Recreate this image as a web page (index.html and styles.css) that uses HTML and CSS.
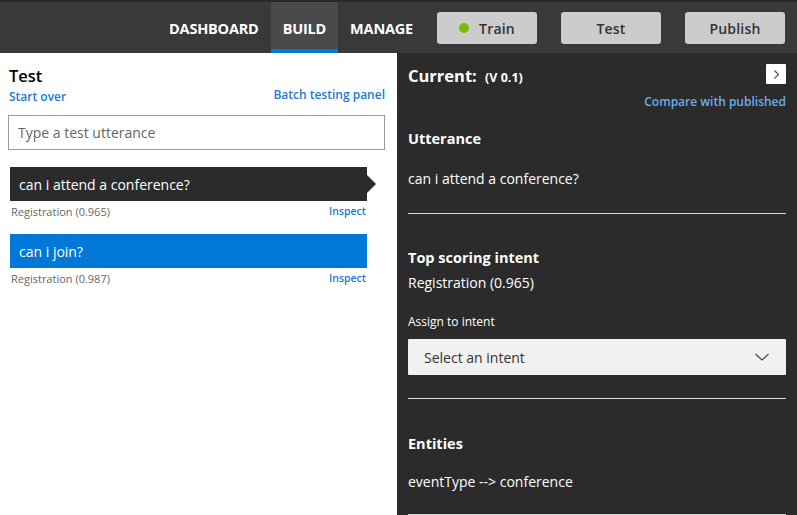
FILE: index.html
```html
<!DOCTYPE html>
<html>
<head>
<meta charset="utf-8">
<link rel="stylesheet" href="styles.css">
</head>
<body>
<header class="topbar">
  <nav class="tabs">
    <a class="tab">DASHBOARD</a>
    <a class="tab active">BUILD</a>
    <a class="tab">MANAGE</a>
  </nav>
  <div class="actions">
    <button class="btn"><span class="dot"></span>Train</button>
    <button class="btn">Test</button>
    <button class="btn">Publish</button>
  </div>
</header>
<main class="main">
  <section class="test-panel">
    <h1 class="test-title">Test</h1>
    <div class="test-links">
      <a class="link start">Start over</a>
      <a class="link batch">Batch testing panel</a>
    </div>
    <div class="input">Type a test utterance</div>
    <div class="results">
      <div class="result">
        <div class="utt selected">can i attend a conference?</div>
        <div class="meta"><span>Registration (0.965)</span><a class="inspect">Inspect</a></div>
      </div>
      <div class="result">
        <div class="utt blue">can i join?</div>
        <div class="meta"><span>Registration (0.987)</span><a class="inspect">Inspect</a></div>
      </div>
    </div>
  </section>
  <section class="inspect-panel">
    <div class="cur-head">
      <div class="cur-title">Current: <span class="ver">(V 0.1)</span></div>
      <div class="chev-box"><svg width="9" height="11" viewBox="0 0 9 11"><path d="M2.5 1.5 L6.5 5.5 L2.5 9.5" fill="none" stroke="#555" stroke-width="1.2"/></svg></div>
    </div>
    <div class="compare"><a class="link2">Compare with published</a></div>
    <div class="block utter">
      <h2 class="sec">Utterance</h2>
      <p class="txt">can i attend a conference?</p>
    </div>
    <div class="block intent">
      <h2 class="sec">Top scoring intent</h2>
      <p class="txt score">Registration (0.965)</p>
      <label class="assign">Assign to intent</label>
      <div class="select"><span>Select an intent</span><svg width="16" height="10" viewBox="0 0 16 10"><path d="M1.5 2 L8 8 L14.5 2" fill="none" stroke="#444" stroke-width="1.2"/></svg></div>
    </div>
    <div class="block entities">
      <h2 class="sec">Entities</h2>
      <p class="txt">eventType --&gt; conference</p>
    </div>
  </section>
</main>
</body>
</html>
```

FILE: styles.css
```css
* { box-sizing: border-box; }
html, body { margin: 0; padding: 0; }
body {
  width: 797px;
  height: 515px;
  overflow: hidden;
  font-family: "Open Sans", "Noto Sans", sans-serif;
  background: #fff;
}
.topbar {
  height: 53px;
  border-top: 2px solid #292929;
  background: #393939;
  display: flex;
  justify-content: flex-end;
  align-items: stretch;
  padding-right: 12px;
}
.tabs { display: flex; }
.tab {
  display: flex;
  align-items: center;
  padding: 5px 12px 0;
  color: #fff;
  font-weight: 700;
  font-size: 14.5px;
  letter-spacing: -0.2px;
  border-bottom: 4px solid transparent;
}
.tab.active {
  background: #4a4a4a;
  border-bottom-color: #0078d7;
}
.actions {
  display: flex;
  gap: 24px;
  margin-left: 12px;
  padding-top: 10px;
}
.btn {
  width: 100px;
  height: 32px;
  border: none;
  border-radius: 3px;
  background: #cccccc;
  color: #333;
  font-family: inherit;
  font-size: 14px;
  font-weight: 600;
  letter-spacing: 0.2px;
  display: flex;
  align-items: center;
  justify-content: center;
  padding: 0;
}
.dot {
  width: 10px;
  height: 10px;
  border-radius: 50%;
  background: #7fba00;
  margin-right: 10px;
}
.main {
  display: flex;
  height: 462px;
}
.test-panel {
  width: 397px;
  background: #fff;
  padding: 10px 12px 0 8px;
}
.test-title {
  margin: 0 0 0 1px;
  font-size: 16.5px;
  font-weight: 600;
  color: #000;
  line-height: 26px;
}
.test-links {
  display: flex;
  justify-content: space-between;
  align-items: flex-end;
  margin-top: 0;
}
.link {
  color: #1a7ad6;
  font-size: 12px;
  font-weight: 600;
}
.start { margin-left: 1px; line-height: 15px; }
.batch { line-height: 14px; position: relative; top: -2px; }
.input {
  margin-top: 11px;
  height: 35px;
  border: 1px solid #999;
  display: flex;
  align-items: center;
  padding-left: 9px;
  font-size: 14px;
  color: #666;
}
.results {
  margin-top: 17px;
  display: flex;
  flex-direction: column;
  gap: 14px;
  padding-left: 2px;
  padding-right: 18px;
}
.utt {
  height: 34px;
  display: flex;
  align-items: center;
  padding-left: 9px;
  color: #fff;
  font-size: 14px;
  position: relative;
}
.utt.selected { background: #2b2b2b; }
.utt.selected::after {
  content: "";
  position: absolute;
  right: -9px;
  top: 8px;
  border-left: 9px solid #2b2b2b;
  border-top: 9px solid transparent;
  border-bottom: 9px solid transparent;
}
.utt.blue { background: #0078d7; }
.meta {
  display: flex;
  justify-content: space-between;
  align-items: flex-start;
  padding-left: 1px;
  margin-top: 3px;
  font-size: 11px;
  color: #666;
  line-height: 16px;
}
.inspect {
  color: #1a7ad6;
  font-size: 10.5px;
  line-height: 14px;
  font-weight: 600;
  margin-right: 1px;
}
.inspect-panel {
  flex: 1;
  background: #2b2b2b;
  color: #fff;
  padding: 11px 11px 0 11px;
  overflow: hidden;
}
.cur-head {
  display: flex;
  justify-content: space-between;
  align-items: flex-start;
}
.cur-title {
  font-size: 16.5px;
  font-weight: 700;
  line-height: 24px;
}
.ver { font-size: 12.5px; margin-left: 4px; }
.chev-box {
  width: 20px;
  height: 20px;
  background: #fff;
  border-radius: 1px;
  display: flex;
  align-items: center;
  justify-content: center;
}
.compare {
  display: flex;
  justify-content: flex-end;
  margin-top: 4px;
}
.link2 {
  color: #69aef0;
  font-size: 12px;
  font-weight: 600;
  line-height: 16px;
}
.block {
  border-bottom: 1px solid #d8d8d8;
}
.sec {
  margin: 0;
  font-size: 14.5px;
  font-weight: 700;
  line-height: 20px;
}
.txt {
  margin: 0;
  font-size: 14px;
  line-height: 20px;
}
.utter { padding-top: 19px; height: 104px; }
.utter .txt { margin-top: 20px; }
.intent { padding-top: 34px; height: 185px; }
.intent .score { margin-top: 5px; }
.assign {
  display: block;
  margin-top: 21px;
  font-size: 12px;
  line-height: 16px;
}
.select {
  margin-top: 9px;
  height: 36px;
  background: #f1f1f1;
  border-radius: 1px;
  color: #333;
  display: flex;
  align-items: center;
  justify-content: space-between;
  padding: 0 16px 0 16px;
  font-size: 14px;
}
.entities { padding-top: 35px; height: 116px; }
.entities .txt { margin-top: 18px; }
```
